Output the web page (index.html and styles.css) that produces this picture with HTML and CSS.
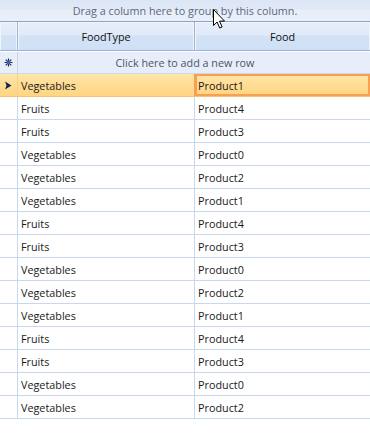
FILE: index.html
```html
<!DOCTYPE html>
<html lang="en">
<head>
  <meta charset="UTF-8"/>
  <title>Food Grid</title>
  <link rel="stylesheet" href="styles.css">
</head>
<body>
  <div class="grid">
    <!-- Group panel -->
    <div class="group-panel">Drag a column here to group by this column.</div>

    <!-- Column headers -->
    <div class="header">
      <div class="ind"></div>
      <div class="head-cell">FoodType</div>
      <div class="head-cell">Food</div>
    </div>

    <!-- New row -->
    <div class="new-row">
      <div class="ind">
        <svg width="9" height="9" viewBox="0 0 9 9">
          <path d="M4.5 0.5v8M0.5 4.5h8M1.7 1.7l5.6 5.6M7.3 1.7l-5.6 5.6" stroke="#1b2f5c" stroke-width="1.2"/>
          <circle cx="4.5" cy="4.5" r="1.6" fill="#3b6fc4"/>
        </svg>
      </div>
      <div class="new-text">Click here to add a new row</div>
    </div>

    <!-- Data rows -->
    <div class="row selected">
      <div class="ind">
        <svg width="7" height="9" viewBox="0 0 7 9"><path d="M0 0.5L6.5 4.5L0 8.5L1.5 4.5z" fill="#102552"/></svg>
      </div>
      <div class="cell">Vegetables</div>
      <div class="cell current">Product1</div>
    </div>
    <div class="row"><div class="ind"></div><div class="cell">Fruits</div><div class="cell">Product4</div></div>
    <div class="row"><div class="ind"></div><div class="cell">Fruits</div><div class="cell">Product3</div></div>
    <div class="row"><div class="ind"></div><div class="cell">Vegetables</div><div class="cell">Product0</div></div>
    <div class="row"><div class="ind"></div><div class="cell">Vegetables</div><div class="cell">Product2</div></div>
    <div class="row"><div class="ind"></div><div class="cell">Vegetables</div><div class="cell">Product1</div></div>
    <div class="row"><div class="ind"></div><div class="cell">Fruits</div><div class="cell">Product4</div></div>
    <div class="row"><div class="ind"></div><div class="cell">Fruits</div><div class="cell">Product3</div></div>
    <div class="row"><div class="ind"></div><div class="cell">Vegetables</div><div class="cell">Product0</div></div>
    <div class="row"><div class="ind"></div><div class="cell">Vegetables</div><div class="cell">Product2</div></div>
    <div class="row"><div class="ind"></div><div class="cell">Vegetables</div><div class="cell">Product1</div></div>
    <div class="row"><div class="ind"></div><div class="cell">Fruits</div><div class="cell">Product4</div></div>
    <div class="row"><div class="ind"></div><div class="cell">Fruits</div><div class="cell">Product3</div></div>
    <div class="row"><div class="ind"></div><div class="cell">Vegetables</div><div class="cell">Product0</div></div>
    <div class="row"><div class="ind"></div><div class="cell">Vegetables</div><div class="cell">Product2</div></div>

    <!-- Mouse pointer over the group panel -->
    <svg class="pointer" width="13" height="20" viewBox="0 0 13 20">
      <path d="M0.5 0.5v16l3.6-3.5 2.6 6 2.4-1-2.6-5.9h5z" fill="#fff" stroke="#000" stroke-width="1" stroke-linejoin="miter"/>
    </svg>
  </div>
</body>
</html>
```

FILE: styles.css
```css
body{
  margin: 0;
  background: #ffffff;
  font-family: 'Open Sans', 'Liberation Sans', sans-serif;
  font-size: 10.8px;
  color: #1a1a1a;
}
.grid{
  position: relative;
  width: 370px;
}
.group-panel{
  height: 21px;
  line-height: 22px;
  text-align: center;
  color: #5a687c;
  background: linear-gradient(#dce6f5 0%, #e1e9f6 48%, #e8eef9 50%, #e9eff9 100%);
  border-bottom: 1px solid #8aa3c7;
}
.header{
  display: grid;
  grid-template-columns: 18px 177px 1fr;
  height: 28px;
  border-bottom: 1px solid #9bb2d2;
  background: linear-gradient(#e6eef9 0%, #e0eaf8 45%, #d3e2f6 50%, #cfe0f6 100%);
}
.header .ind,
.head-cell{
  border-right: 1px solid #9fb5d3;
  box-shadow: inset -1px 0 0 #eef4fc, inset 1px 1px 0 #f2f6fc;
}
.head-cell{
  display: flex;
  align-items: center;
  justify-content: center;
  color: #111;
}
.head-cell:last-child{
  border-right: none;
}
.new-row{
  position: relative;
  display: flex;
  align-items: center;
  height: 21px;
  border-top: 1px solid #ffffff;
  border-bottom: 1px solid #cad9ee;
  background: #e8eef9;
}
.new-row .ind{
  width: 17px;
  height: 100%;
  display: flex;
  align-items: center;
  justify-content: center;
  border-right: 1px solid #c4d5ec;
}
.new-text{
  position: absolute;
  left: 0;
  right: 0;
  text-align: center;
  color: #4b5567;
}
.row{
  display: grid;
  grid-template-columns: 18px 177px 1fr;
  height: 22px;
  border-bottom: 1px solid #c9d8ee;
}
.row .ind,
.cell{
  border-right: 1px solid #c9d8ee;
}
.row .ind{
  display: flex;
  align-items: center;
  justify-content: center;
}
.cell{
  display: flex;
  align-items: center;
  padding-left: 3px;
  white-space: nowrap;
}
.cell:last-child{
  border-right: none;
}
.row.selected{
  background: linear-gradient(#ffe6ab 0%, #ffdc94 50%, #ffd582 100%);
  border-bottom-color: #f3c277;
}
.row.selected .ind,
.row.selected .cell{
  border-right-color: #f1cf8e;
}
.row.selected .cell:nth-child(2){
  border-right-color: #f8a04f;
}
.cell.current{
  box-shadow: inset 0 0 0 2px #f8a04f;
}
.pointer{
  position: absolute;
  left: 213px;
  top: 9px;
}
```
